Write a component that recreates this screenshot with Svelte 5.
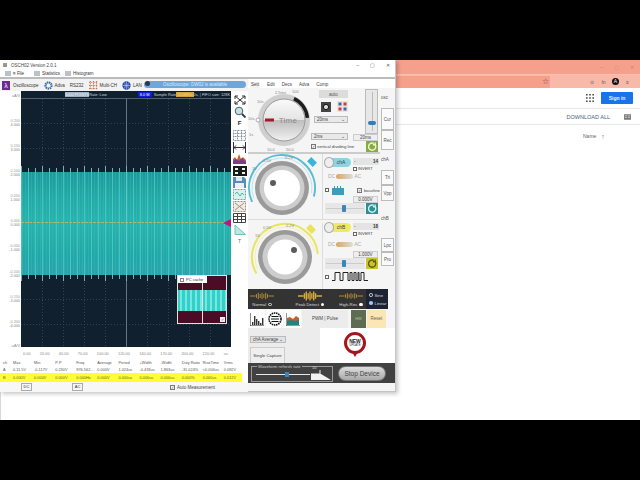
<script>
  const W = 210;
  let wave = '';
  let fine = '';
  let spikes = '';
  for (let x = 0; x < W; x += 1) {
    const phase = x % 7;
    if (phase === 0) {
      const a = x % 21 === 0 ? 6 : 4;
      spikes += `M${x + 0.5} ${81 - a}V81M${x + 0.5} 184V${184 + a}`;
      wave += `M${x + 0.5} 81V184`;
    }
    if (x % 3 === 1) fine += `M${x + 0.5} 81V184`;
  }
  const yLabels = [
    ['0.200', '4.000', 123], ['0.150', '3.000', 148], ['0.100', '2.000', 173], ['0.050', '1.000', 198],
    ['0.000', '0.000', 223], ['-0.050', '-1.000', 248], ['-0.100', '-2.000', 274], ['-0.150', '-3.000', 299],
    ['-0.200', '-4.000', 324]
  ];
  const xLabels = ['0.00','20.00','40.00','70.00','100.00','120.00','140.00','170.00','200.00','220.00','us'];
  const head = ['ch','Max','Min','P-P','Freq','Average','Period','+Width','-Width','Duty Ratio','RiseTime','Vrms'];
  const rowA = ['A','0.11 5V','-0.117V','0.230V','976.562...','0.000V','1.024us','-0.433us','1.863us','-31.024%','<0.004us','0.082V'];
  const rowB = ['B','0.000V','0.000V','0.000V','0.000Hz','0.000V','0.000us','0.000us','0.000us','0.000%','0.000us','0.012V'];
  const tabs = ['Sett','Edit','Decs','Adva','Comp'];
  const modes = [['Normal', true, 7], ['Peak Detect', false, 10], ['High-Res', false, 6]];
  const bars = [3, 9, 6, 4, 2, 7];
  function pt(cx, cy, r, deg) {
    const a = (deg - 90) * Math.PI / 180;
    return [cx + r * Math.cos(a), cy + r * Math.sin(a)];
  }
  function arc(cx, cy, r, from, to) {
    const [x1, y1] = pt(cx, cy, r, from);
    const [x2, y2] = pt(cx, cy, r, to);
    return `M${x1} ${y1}A${r} ${r} 0 ${to - from > 180 ? 1 : 0} 1 ${x2} ${y2}`;
  }
  function modeWave(h) {
    let d = 'M0 3.5h6M20 3.5h6';
    for (let i = 0; i < 7; i++) {
      const hh = (i % 2 ? h : h * 0.6) / 2;
      d += `M${7 + i * 2} ${3.5 - hh}V${3.5 + hh}`;
    }
    return d;
  }
</script>

<div class="screen">
  <div class="letterbox"></div>
  <main class="desktop">
    <section class="browser">
      <div class="b-title"><span>–</span><span>▢</span><span>✕</span></div>
      <div class="b-addr">
        <div class="addr-field"><span class="star">☆</span></div>
        <span class="ext">⊙</span><span class="ext">In</span><span class="ext dark">A</span><span class="ext">≡</span>
      </div>
      <div class="b-head">
        <svg width="10" height="10" viewBox="0 0 10 10" class="apps"><path d="M1 1h1.600v1.600H1zM4.200 1h1.600v1.600H4.200zM7.400 1H9v1.600H7.400zM1 4.200h1.600v1.600H1zM4.200 4.200h1.600v1.600H4.200zM7.400 4.200H9v1.600H7.400zM1 7.400h1.600V9H1zM4.200 7.400h1.600V9H4.200zM7.400 7.400H9V9H7.400z" fill="#444"/></svg>
        <button class="signin">Sign in</button>
      </div>
      <div class="b-tools">
        <span class="dl">DOWNLOAD ALL</span>
        <svg width="7" height="6" viewBox="0 0 9 7"><rect width="9" height="7" fill="#777"/><path d="M1 2h3M1 4h3M5 2h3M5 4h3" stroke="#fff" stroke-width=".7"/></svg>
      </div>
      <div class="b-list"><span>Name</span><span class="up">↑</span></div>
    </section>

    <section class="window">
      <header class="titlebar">
        <span class="app-ico"></span><span class="title">OSCH02 Version 2.0.1</span>
        <div class="win-btns"><span>–</span><span>▢</span><span>✕</span></div>
      </header>
      <nav class="menubar">
        <span class="mi"><i class="m-ico"></i>≡ File</span>
        <span class="mi stat"><i class="m-ico"></i>Statistics</span>
        <span class="mi"><i class="m-ico"></i>Histogram</span>
      </nav>

      <div class="content">
        <div class="left">
          <nav class="tabbar">
            <span class="lam">λ</span><span class="t">Oscilloscope</span>
            <svg width="9" height="9" viewBox="0 0 10 10"><circle cx="5" cy="5" r="3.400" fill="none" stroke="#3a6ea5" stroke-width="2.400" stroke-dasharray="1.600 .7"/></svg><span class="t">Adva</span>
            <span class="t">RS232</span>
            <svg width="9" height="9" viewBox="0 0 10 10"><path d="M0 1.500h10M0 5h10M0 8.500h10M1.500 0v10M5 0v10M8.500 0v10" stroke="#b5562c" stroke-dasharray="1 1"/></svg><span class="t">Multi-CH</span>
            <svg width="9" height="9" viewBox="0 0 10 10"><circle cx="5" cy="5" r="4.600" fill="#2748a8"/><path d="M5 .5v9M.5 5h9M2.500 1.500c1.500 2 1.500 5 0 7M7.500 1.500c-1.500 2-1.500 5 0 7" stroke="#cdd9f5" stroke-width=".6" fill="none"/></svg><span class="t">LAN</span>
            <span class="t faint">⟋ C</span>
            <div class="notice"><i></i>Oscilloscope: DW02 is available</div>
          </nav>
          <div class="scope-row">
            <div class="y-axis">
              <span class="yl top">uA/V</span>
              {#each yLabels as l}
                <span class="yl" style="top:{l[2] - 91 - 4.5}px"><em>{l[0]}</em><br />{l[1]}</span>
              {/each}
              <span class="yl bot">-uA/V</span>
            </div>
            <div class="scope">
              <svg width="210" height="256" viewBox="0 0 210 256">
                <defs>
                  <linearGradient id="band" x1="0" y1="0" x2="0" y2="1">
                    <stop offset="0" stop-color="#1c9a9c"/><stop offset=".25" stop-color="#22a9a8"/><stop offset=".5" stop-color="#27b3ad"/><stop offset=".8" stop-color="#21a8a8"/><stop offset="1" stop-color="#2aa3ac"/>
                  </linearGradient>
                </defs>
                <path d="M0 7.500H210" stroke="#51606c" />
                <g stroke="#2c4554" stroke-dasharray="1 2">
                  {#each [21,42,63,84,126,147,168,189] as x}<path d="M{x}.5 8V256" />{/each}
                  {#each [32,57,82,107,132,157,183,208,233] as y}<path d="M0 {y}.5H210" />{/each}
                </g>
                <path d="M105.500 8V256" stroke="#66757f" />
                <path d={spikes} stroke="#6fb3b6" />
                <rect x="0" y="81" width="210" height="103" fill="url(#band)"/>
                <path d={fine} stroke="#46c4bf" stroke-opacity=".3" />
                <path d={wave} stroke="#62d6d0" stroke-opacity=".55" />
                <path d="M0 131.500H210" stroke="#c2b45c" stroke-dasharray="3 1" stroke-opacity=".9"/>
                <path d="M105.500 81V184" stroke="#7fd4d0" stroke-opacity=".4" />
                <path d="M202 132l8-4v8z" fill="#c4127c" />
              </svg>
              <div class="infobar">
                <span class="live"><b>3000 POINTS</b>Rate: Low</span>
                <span class="rate"><b class="mem">8.0 M</b> Sample Rate<b class="amber">250MS/s</b>0s, | FIFO size: 128K</span>
              </div>
              <div class="pc">
                <label class="pc-lab"><i></i>PC cache</label>
                <svg width="50" height="48" viewBox="0 0 50 48">
                  <rect width="50" height="48" fill="#4c0c25"/>
                  <rect y="14" width="50" height="21" fill="#2fd2ca"/>
                  <path d="M3 14v21M8 14v21M13 14v21M18 14v21M23 14v21M28 14v21M33 14v21M38 14v21M43 14v21M48 14v21" stroke="#a5eee9" stroke-width="1.300"/>
                  <path d="M24.500 0V48" stroke="#e6e0e0"/>
                </svg>
                <i class="pc-check">✓</i>
              </div>
            </div>
            <aside class="tools">
              <svg width="14" height="10" viewBox="0 0 14 10"><path d="M2 1l10 8M12 1L2 9M2 1h3M2 1v3M12 1h-3M12 1v3M2 9h3M2 9V6M12 9H9M12 9V6" stroke="#333" fill="none"/></svg>
              <svg width="12" height="12" viewBox="0 0 12 12"><circle cx="5" cy="5" r="3.800" fill="#bfe3dd" stroke="#557"/><path d="M8 8l3.500 3.500" stroke="#333" stroke-width="1.800"/></svg>
              <b class="f">F</b>
              <svg width="13" height="11" viewBox="0 0 13 11"><path d="M.5.500h12v10H.5zM.5 3.500h12M.5 6.500h12M4.500.500v10M8.500.500v10" stroke="#8a98a6" fill="none" stroke-dasharray="1 .5"/></svg>
              <svg width="13" height="11" viewBox="0 0 13 11"><path d="M.5 0v11M12.500 0v11M1 5.500h11M1 5.500l2-2M1 5.500l2 2M12 5.500l-2-2M12 5.500l-2 2" stroke="#334" fill="none"/></svg>
              <svg width="13" height="11" viewBox="0 0 13 11"><path d="M0 11V6l2-2 2 3 2-6 2 5 2-2 3 3v4z" fill="#c9622b"/><path d="M0 11V8l3-2 3 2 3-3 4 4v2z" fill="#7a3c8e"/></svg>
              <svg width="14" height="10" viewBox="0 0 14 10"><rect width="14" height="10" fill="#1a1a1a"/><path d="M2 2h3v2H2zM9 2h3v2H9zM2 6h3v2H2zM9 6h3v2H9z" fill="#eee"/></svg>
              <svg width="13" height="11" viewBox="0 0 13 11"><path d="M0 0h11l2 2v9H0z" fill="#5a8db5"/><rect x="3" y="0" width="6" height="4" fill="#dbe9f3"/><rect x="2" y="6" width="9" height="5" fill="#eaf2f8"/></svg>
              <svg width="13" height="11" viewBox="0 0 13 11"><rect x=".5" y=".5" width="12" height="10" fill="#d9f0ec" stroke="#57b3a9" stroke-dasharray="1 .5"/><path d="M2 5l2-2 3 4 2-3 2 2" stroke="#57b3a9" fill="none"/></svg>
              <svg width="13" height="11" viewBox="0 0 13 11"><rect x=".5" y=".5" width="12" height="10" fill="#f1ebe3" stroke="#9c8f86" stroke-dasharray="1 .5"/><path d="M2 2l9 7M11 2L2 9" stroke="#9c8f86"/></svg>
              <svg width="13" height="10" viewBox="0 0 13 10"><path d="M.5.500h12v9H.5zM.5 3.500h12M.5 6.500h12M4.500.500v9M8.500.500v9" stroke="#444" fill="none"/></svg>
              <svg width="12" height="11" viewBox="0 0 12 11"><path d="M1 10.500h10.500L1 1z" fill="#bfe6e0" stroke="#6cc4b8"/></svg>
              <span class="t-ico">T</span>
            </aside>
          </div>
          <div class="x-axis">{#each xLabels as l}<span>{l}</span>{/each}</div>
          <table class="meas">
            <thead><tr>{#each head as h}<th>{h}</th>{/each}</tr></thead>
            <tbody>
              <tr>{#each rowA as v}<td>{v}</td>{/each}</tr>
              <tr class="yellow">{#each rowB as v}<td>{v}</td>{/each}</tr>
            </tbody>
          </table>
          <div class="bottom-row">
            <span class="mini dc">DC</span>
            <span class="mini ac">AC</span>
            <label class="auto"><i>✓</i>Auto Measurement</label>
          </div>
        </div>

        <div class="right">
          <div class="r-tabs">{#each tabs as t, i}<span class:active={i === 0}>{t}</span>{/each}</div>

          <div class="r-main">
            <div class="r-col">
              <!-- timebase -->
              <div class="timebase">
                <svg class="dial time" width="66" height="64" viewBox="0 0 66 64">
                  <defs>
                    <linearGradient id="metal" x1="0" y1="0" x2="0" y2="1">
                      <stop offset="0" stop-color="#fafafa"/><stop offset=".5" stop-color="#e4e4e4"/><stop offset=".5" stop-color="#bdbdbd"/><stop offset="1" stop-color="#f2f2f2"/>
                    </linearGradient>
                  </defs>
                  <circle cx="36" cy="31" r="26" fill="#cfcfcf"/>
                  <circle cx="36" cy="31" r="21" fill="url(#metal)" stroke="#9a9a9a"/>
                  <path d={arc(36, 31, 23.500, 25, 85)} fill="none" stroke="#1c1c1c" stroke-width="3.500"/>
                  <rect x="17" y="29.500" width="9" height="3" fill="#a31a28"/>
                  <text x="40" y="34" class="time-text">Time</text>
                  <circle cx="10" cy="31" r="2" fill="#fff" stroke="#aaa"/>
                  <g class="dial-lab">
                    <text x="27" y="5">2.5ms</text><text x="44" y="4">100</text><text x="9" y="14">10s</text><text x="0" y="31">10s</text><text x="1" y="47">1s</text><text x="19" y="62">10.0</text><text x="38" y="62">50.0</text>
                  </g>
                </svg>
                <div class="tb-ctl">
                  <button class="auto-btn">auto</button>
                  <div class="cam-row">
                    <svg width="10" height="10" viewBox="0 0 10 10"><rect width="10" height="10" fill="#444"/><circle cx="5" cy="5" r="2.600" fill="#ddd" stroke="#111"/></svg>
                    <svg width="11" height="11" viewBox="0 0 11 11"><rect width="11" height="11" fill="#efe4d3"/><path d="M1.500 1.500h3v3h-3z" fill="#3468b8"/><path d="M6.500 1.500h3v3h-3z" fill="#c43b58"/><path d="M1.500 6.500h3v3h-3z" fill="#c43b58"/><path d="M6.500 6.500h3v3h-3z" fill="#3468b8"/></svg>
                  </div>
                  <div class="sel s1">20ms<span>⌄</span></div>
                  <div class="sel s2">2ms<span>⌄</span></div>
                  <label class="vdl"><i>✓</i>vertical dividing line</label>
                </div>
                <div class="tb-side">
                  <div class="vslider"><i></i><b></b></div>
                  <div class="val">20ms</div>
                  <div class="round green">
                    <svg width="9" height="9" viewBox="0 0 10 10"><path d="M8 3a4 4 0 1 1-1.500-1.400M8 .5V3H5.500" fill="none" stroke="#f0f6d8" stroke-width="1.500"/></svg>
                  </div>
                </div>
              </div>

              <!-- channel A -->
              <div class="channel cha">
                <svg class="dial" width="72" height="64" viewBox="0 0 72 64">
                  <path d={arc(34, 34, 33, -115, 105)} fill="none" stroke="#59bcd6" stroke-width="2"/>
                  <path d={arc(34, 34, 30, -110, 100)} fill="none" stroke="#bfe3ee" stroke-width="1"/>
                  <circle cx="34" cy="34" r="27" fill="#9a9a9a"/>
                  <circle cx="34" cy="34" r="22.500" fill="#cdcdcd"/>
                  <circle cx="34" cy="34" r="18" fill="#fff"/>
                  <circle cx="25" cy="29" r="3" fill="#5b5b5b"/>
                  <g class="dial-lab">
                    <text x="15" y="8">0.5V</text><text x="37" y="5">0.2V</text><text x="4" y="16">1V</text>
                  </g>
                  <rect x="60" y="5" width="8" height="6" transform="rotate(45 64 8)" fill="#3cb5dd"/>
                </svg>
                <div class="ch-ctl">
                  <div class="ch-top">
                    <div class="toggle ta"><i></i><span>chA</span></div>
                    <div class="col">
                      <div class="spin"><span>-</span><b>14</b></div>
                      <label class="inv"><i></i>INVERT</label>
                    </div>
                  </div>
                  <div class="coupling"><span>DC</span><i class="pill"></i><span>AC</span></div>
                  <div class="base">
                    <label class="bx"><i></i></label>
                    <svg width="12" height="9" viewBox="0 0 12 9"><path d="M0 9V2h2V0h1v2h2V0h1v2h2V0h1v2h3v7z" fill="#3b9dbb"/></svg>
                    <label class="baseline"><i>✓</i>baseline</label>
                  </div>
                  <div class="val wide">0.000V</div>
                  <div class="ch-slide">
                    <div class="hslider"><i></i></div>
                    <div class="round teal"><svg width="9" height="9" viewBox="0 0 10 10"><path d="M8 3a4 4 0 1 1-1.500-1.400M8 .5V3H5.500" fill="none" stroke="#d5f1ef" stroke-width="1.500"/></svg></div>
                  </div>
                </div>
              </div>

              <!-- channel B -->
              <div class="channel chb">
                <svg class="dial" width="72" height="64" viewBox="0 0 72 64">
                  <path d={arc(37, 33, 33, -120, 85)} fill="none" stroke="#e8e466" stroke-width="2"/>
                  <path d={arc(37, 33, 30, -115, 80)} fill="none" stroke="#f2f0b5" stroke-width="1"/>
                  <circle cx="37" cy="33" r="27" fill="#9a9a9a"/>
                  <circle cx="37" cy="33" r="22.500" fill="#cdcdcd"/>
                  <circle cx="37" cy="33" r="17.500" fill="#fff"/>
                  <circle cx="46" cy="26" r="3" fill="#5b5b5b"/>
                  <g class="dial-lab">
                    <text x="15" y="5">0.5V</text><text x="38" y="3">0.2V</text><text x="7" y="13">1V</text>
                  </g>
                  <rect x="59" y="2" width="8" height="6" transform="rotate(45 63 5)" fill="#ece35a"/>
                </svg>
                <div class="ch-ctl">
                  <div class="ch-top">
                    <div class="toggle tb"><i></i><span>chB</span></div>
                    <div class="col">
                      <div class="spin"><span>-</span><b>18</b></div>
                      <label class="inv"><i></i>INVERT</label>
                    </div>
                  </div>
                  <div class="coupling"><span>DC</span><i class="pill"></i><span>AC</span></div>
                  <div class="val wide right-val">1.000V</div>
                  <div class="ch-slide">
                    <div class="hslider"><i></i></div>
                    <div class="round yel"><svg width="9" height="9" viewBox="0 0 10 10"><path d="M8 3a4 4 0 1 1-1.500-1.400M8 .5V3H5.500" fill="none" stroke="#5d5a10" stroke-width="1.500"/></svg></div>
                  </div>
                  <div class="sq">
                    <label class="bx"><i></i></label>
                    <svg width="44" height="9" viewBox="0 0 44 9"><path d="M0 8.500h3V.5h5v8h3V.5h5v8h2V.5h2v8h2V.5h2v8h2V.5h1v8h2V.5h3v8h4" fill="none" stroke="#222"/></svg>
                  </div>
                </div>
              </div>
            </div>

            <div class="side">
              <span class="s-plain a1">osc</span>
              <span class="s-box b1">Cur</span>
              <span class="s-box b2">Rec</span>
              <span class="s-plain a2">chA</span>
              <span class="s-box b3">Tri</span>
              <span class="s-box b4">Vpp</span>
              <span class="s-plain a3">chB</span>
              <span class="s-box b5">Lpc</span>
              <span class="s-box b5">Pro</span>
            </div>
          </div>

          <div class="modes">
            {#each modes as m}
              <div class="mode">
                <svg width="24" height="10" viewBox="0 -1.500 26 10"><path d={modeWave(m[2])} stroke="#d8a93b" stroke-width={m[2] === 10 ? 1.500 : .8}/></svg>
                <span>{m[0]} <i class:hollow={m[1]}></i></span>
              </div>
            {/each}
            <div class="mode-r">
              <span><i class="hollow"></i>Sine</span>
              <span><i class="blue"></i>Linear</span>
            </div>
          </div>

          <div class="func-row">
            <div class="fbtn"><svg width="14" height="13" viewBox="0 0 14 13"><path d="M0 0v13h14" stroke="#222" fill="none"/>{#each bars as b, i}<rect x={2 + i * 2} y={12 - b} width="1.400" height={b} fill="#333"/>{/each}</svg></div>
            <div class="fbtn"><svg width="14" height="14" viewBox="0 0 14 14"><circle cx="7" cy="7" r="6" fill="none" stroke="#111" stroke-width="1.600" stroke-dasharray="1.500 .7"/><path d="M3.500 4.500h7M3 7h8M3.500 9.500h7" stroke="#111" stroke-width="1.100"/></svg></div>
            <div class="fbtn"><svg width="14" height="13" viewBox="0 0 14 13"><path d="M0 0v13h14" stroke="#333" fill="none"/><path d="M1 12V5l3-1 3 2 3-3 3 2v7z" fill="#c35f2c"/><path d="M1 12V8l4-1 4 1 4-1v5z" fill="#18877f"/></svg></div>
            <div class="pwm">PWM | Pulse</div>
            <div class="hw">HW</div>
            <div class="reset">Reset</div>
          </div>

          <div class="lower">
            <div class="acq">
              <div class="sel s3">chA Average<span>⌄</span></div>
              <button class="single">Single Capture</button>
            </div>
            <div class="new">
              <svg width="24" height="28" viewBox="0 0 24 28">
                <circle cx="12" cy="12" r="9.500" fill="#fff" stroke="#a5161c" stroke-width="3"/>
                <path d="M9 21h6l-3 5z" fill="#a5161c"/>
              </svg>
              <span>NEW<small>UPDATE</small></span>
            </div>
          </div>

          <div class="footer">
            <fieldset>
              <legend>Waveform refresh rate</legend>
              <div class="rate-slider"><i></i></div>
              <div class="rate-val">
                <small>10</small>
                <svg width="20" height="10" viewBox="0 0 20 10"><path d="M0 4h10L20 10H0z" fill="#f2f2f2"/><path d="M0 4h9V0" fill="none" stroke="#f2f2f2"/></svg>
              </div>
            </fieldset>
            <button class="stop">Stop Device</button>
          </div>
        </div>
      </div>
    </section>
  </main>
  <div class="letterbox"></div>
</div>

<style>
  :global(body) { margin: 0; background: #000; }
  * { box-sizing: border-box; }
  .screen { width: 640px; height: 480px; display: flex; flex-direction: column; font-family: "Liberation Sans", Arial, sans-serif; overflow: hidden; color: #333; }
  .letterbox { height: 60px; background: #000; }
  .desktop { position: relative; height: 360px; background: #fff; box-shadow: inset 1px 0 0 #d8d8d8; }

  .browser { position: absolute; left: 396px; top: 0; right: 0; height: 360px; display: flex; flex-direction: column; }
  .b-title { height: 14px; background: #f5a08c; display: flex; justify-content: flex-end; align-items: center; gap: 11px; padding-right: 6px; font-size: 5px; color: #c98273; }
  .b-addr { height: 14px; background: #f8b9a9; display: flex; align-items: center; gap: 5px; padding-right: 2px; font-size: 5px; border-top: 1px solid #f8c0b2; }
  .addr-field { width: 154px; height: 12px; background: #f6a08c; display: flex; justify-content: flex-end; align-items: center; padding-right: 1px; margin-right: 33px; }
  .star { font-size: 8px; color: #6b3a32; }
  .ext { width: 7px; text-align: center; color: #555; }
  .ext.dark { background: #111; color: #fff; border-radius: 50%; height: 7px; line-height: 7px; }
  .b-head { height: 21px; display: flex; justify-content: flex-end; align-items: center; padding-right: 7px; border-bottom: 1px solid #e8e8e8; }
  .apps { margin-right: 6px; }
  .signin { width: 32px; height: 12px; padding: 0; border: 0; background: #1a73e8; border-radius: 1px; color: #e8f0fe; font: 700 5px "Liberation Sans", sans-serif; }
  .b-tools { height: 16px; display: flex; justify-content: flex-end; align-items: center; gap: 14px; padding-right: 9px; border-bottom: 1px solid #e8e8e8; }
  .dl { font-size: 5.500px; color: #48627e; }
  .b-list { height: 22px; display: flex; gap: 5px; align-items: center; padding-left: 187px; font-size: 5px; color: #666; }
  .up { font-size: 7px; }

  .window { position: absolute; left: 0; top: 0; width: 396px; height: 332px; background: #f3f3f3; border-right: 1px solid #c4c4cc; border-bottom: 1px solid #c4c4c4; box-shadow: 2px 2px 4px rgba(0,0,0,.22); display: flex; flex-direction: column; z-index: 1; }
  .titlebar { height: 10px; background: #fff; display: flex; align-items: center; font-size: 4.500px; padding: 0 3px; flex: none; }
  .app-ico { width: 4px; height: 4px; background: linear-gradient(135deg, #c95, #69b); margin-right: 4px; }
  .title { color: #444; }
  .win-btns { margin-left: auto; display: flex; gap: 11px; font-size: 5px; padding-right: 2px; color: #555; }
  .menubar { height: 9px; background: #fff; border-bottom: 2px solid #bbb; display: flex; align-items: center; font-size: 4.500px; padding-left: 5px; flex: none; }
  .mi { display: flex; align-items: center; gap: 2px; width: 29px; }
  .stat { width: 31px; }
  .m-ico { width: 6px; height: 5px; background: #b9c2c9; display: block; }
  .tabbar { height: 12px; background: #f2f2f2; display: flex; align-items: center; gap: 2px; padding-left: 2px; font-size: 4.500px; flex: none; position: relative; }
  .lam { width: 8px; height: 9px; background: #6b2a96; color: #fff; font-size: 7px; line-height: 9px; text-align: center; margin-right: 1px; }
  .t { color: #333; margin-right: 3px; }
  .faint { color: #bbb; }
  .notice { position: absolute; left: 144px; top: 2px; width: 102px; height: 7px; background: #6ea6d9; border-radius: 4px; color: #dcebf8; font-size: 4.500px; line-height: 7px; text-align: center; }
  .notice i { position: absolute; left: 1px; top: 0; width: 5px; height: 5px; background: #26384f; border-radius: 50%; }

  .content { display: flex; flex: 1; min-height: 0; }
  .left { width: 248px; flex: none; background: #fff; display: flex; flex-direction: column; }
  .scope-row { display: flex; height: 257px; flex: none; }
  .y-axis { width: 21px; position: relative; font-size: 3.800px; color: #888; text-align: right; line-height: 4.500px; }
  .yl { position: absolute; right: 1px; white-space: nowrap; }
  .yl em { font-style: normal; color: #999; }
  .yl.top { top: 3px; } .yl.bot { top: 253px; }
  .scope { width: 210px; height: 256px; background: #10202e; position: relative; }
  .scope svg { display: block; }
  .infobar { position: absolute; left: 0; right: 0; top: 0; height: 7px; display: flex; justify-content: space-between; align-items: center; color: #ced6db; font-size: 3.900px; padding: 0 1px 0 44px; }
  .infobar b { font-weight: 400; }
  .live b { background: #9fb2c4; color: #eef3f7; }
  .mem { background: #0a1fd8; color: #fff; padding: 0 2px; margin-right: 1px; }
  .amber { background: #d6a33e; color: #f0d690; padding: 0 1px; }
  .pc { position: absolute; left: 156px; top: 184px; width: 50px; height: 49px; background: #4c0c25; border: 1px solid #e5e0e0; overflow: hidden; }
  .pc > svg { position: absolute; left: 0; top: 0; }
  .pc-lab { position: absolute; left: 0; top: 0; z-index: 1; width: 29px; height: 7px; background: #fff; font-size: 4px; color: #333; display: flex; align-items: center; gap: 2px; padding-left: 2px; }
  .pc-lab i { width: 4px; height: 4px; border: .5px solid #888; }
  .pc-check { position: absolute; right: 1px; bottom: 1px; width: 5px; height: 5px; background: #eee; color: #555; font-size: 4px; line-height: 5px; font-style: normal; text-align: center; }

  .tools { width: 17px; display: grid; grid-auto-rows: 11.800px; justify-items: center; align-items: center; align-content: start; padding-top: 3px; background: #fff; }
  .f { font-size: 6px; line-height: 11px; color: #222; }
  .t-ico { font-size: 5px; color: #666; }

  .x-axis { display: flex; justify-content: space-between; height: 10px; align-items: center; width: 226px; padding-left: 21px; margin-left: 2px; font-size: 3.900px; color: #888; flex: none; }
  .meas { border-collapse: collapse; table-layout: fixed; width: 242px; font-size: 3.900px; flex: none; }
  .meas th, .meas td { font-weight: 400; text-align: left; padding: 0 0 0 3px; height: 7px; line-height: 7px; color: #555; white-space: nowrap; overflow: hidden; }
  .meas th { height: 8px; }
  .meas th:first-child, .meas td:first-child { width: 10px; }
  .yellow td { background: #ffff33; color: #66681c; height: 9px; }
  .bottom-row { height: 10px; display: flex; align-items: center; font-size: 4px; flex: none; background: #f7f7f7; }
  .mini { border: 1px solid #aaa; height: 8px; width: 11px; text-align: center; background: #f6f6f6; line-height: 6px; }
  .dc { margin-left: 21px; }
  .ac { margin-left: 40px; }
  .auto { margin-left: 87px; display: flex; align-items: center; gap: 2px; color: #444; font-size: 4.500px; }
  .auto i, .vdl i, .baseline i { width: 5px; height: 5px; border: .5px solid #777; display: block; font-size: 4px; line-height: 4px; font-style: normal; text-align: center; }

  .right { width: 147px; flex: none; background: #f5f5f5; display: flex; flex-direction: column; }
  .r-tabs { height: 9px; background: #fff; display: flex; font-size: 4.500px; padding-left: 2px; gap: 6px; align-items: flex-end; flex: none; color: #444; }
  .r-tabs span { padding: 0 0 1px 1px; }
  .r-tabs .active { background: #f2f2f2; padding: 0 1px 1px; }

  .r-main { display: flex; flex: none; height: 201px; }
  .r-col { width: 132px; display: flex; flex-direction: column; }
  .timebase { height: 66px; display: flex; border-bottom: 2px solid #ccc; padding-top: 1px; flex: none; }
  .dial { display: block; flex: none; overflow: visible; }
  .dial-lab text { font-size: 4px; fill: #888; }
  .time-text { font-size: 8px; fill: #8a8a8a; text-anchor: middle; letter-spacing: .3px; }
  .tb-ctl { width: 37px; margin-left: -3px; display: flex; flex-direction: column; align-items: flex-end; font-size: 4.500px; }
  .auto-btn { width: 29px; height: 8px; padding: 0; border: 0; background: #dcdcdc; color: #555; font: 4.500px "Liberation Sans", sans-serif; margin: 1px 0 3px; }
  .cam-row { width: 28px; display: flex; gap: 6px; align-items: center; height: 11px; padding-left: 1px; }
  .sel { height: 7px; background: #e9e9e9; border: .5px solid #bbb; display: flex; justify-content: space-between; align-items: center; padding: 0 2px; font-size: 4.500px; color: #444; }
  .s1 { width: 34px; margin-top: 4px; }
  .s2 { width: 37px; margin-top: 10px; }
  .vdl { display: flex; gap: 1px; align-items: center; font-size: 4.300px; white-space: nowrap; margin-top: 4px; width: 37px; color: #444; }
  .tb-side { margin-left: 5px; width: 25px; display: flex; flex-direction: column; align-items: flex-end; }
  .vslider { width: 13px; height: 45px; background: #e7e7e7; border: .5px solid #bbb; position: relative; }
  .vslider i { position: absolute; left: 6px; top: 2px; bottom: 2px; width: 1px; background: #bbb; }
  .vslider b { position: absolute; left: 2px; top: 31px; width: 8px; height: 4px; background: #2f7fb8; border-radius: 2px; }
  .val { height: 7px; width: 25px; background: #eee; border: .5px solid #ccc; font-size: 4.500px; text-align: center; line-height: 6px; color: #444; }
  .round { width: 12px; height: 11px; display: flex; align-items: center; justify-content: center; flex: none; }
  .green { background: #87ac3c; }
  .teal { background: #2d8f93; }
  .yel { background: #c9c528; }

  .channel { display: flex; height: 66px; flex: none; }
  .cha { border-bottom: 1px solid #ddd; }
  .chb { height: 69px; padding-top: 4px; }
  .ch-ctl { width: 58px; margin-left: 2px; border-left: .5px solid #ddd; padding: 4px 0 0 2px; display: flex; flex-direction: column; }
  .chb .ch-ctl { padding-top: 0; margin-top: -1px; }
  .chb .coupling { margin-top: 3px; }
  .ch-top { display: flex; gap: 2px; }
  .toggle { width: 26px; height: 9px; border-radius: 5px; position: relative; font-size: 5px; line-height: 9px; text-align: center; padding-left: 6px; color: #444; }
  .toggle i { position: absolute; left: -1px; top: -1px; width: 10px; height: 11px; border-radius: 50%; background: #eee; border: .5px solid #aaa; }
  .ta { background: #8bd4e2; }
  .tb { background: #eeea62; }
  .col { display: flex; flex-direction: column; }
  .spin { width: 26px; height: 7px; background: #e4e4e4; display: flex; justify-content: space-between; padding: 0 1px; font-size: 4.500px; line-height: 7px; }
  .inv { display: flex; align-items: center; gap: 1px; font-size: 4px; height: 7px; color: #444; }
  .inv i, .bx i { width: 4px; height: 4px; border: .5px solid #666; display: block; background: #fff; }
  .coupling { display: flex; gap: 1px; align-items: center; font-size: 5px; color: #aaa; padding-left: 3px; height: 8px; }
  .pill { width: 17px; height: 5px; border-radius: 3px; background: linear-gradient(90deg, #d9a760, #dcdcdc); display: block; }
  .base { display: flex; align-items: center; gap: 3px; height: 12px; margin-top: 4px; }
  .bx { display: block; }
  .baseline { display: flex; gap: 2px; align-items: center; font-size: 4.300px; margin-left: 10px; color: #444; }
  .wide { align-self: flex-end; margin-right: 2px; }
  .ch-slide { display: flex; align-items: center; gap: 1px; }
  .hslider { width: 40px; height: 11px; background: #e7e7e7; position: relative; }
  .hslider::before { content: ""; position: absolute; left: 1px; right: 1px; top: 5px; height: 1px; background: #ccc; }
  .hslider i { position: absolute; left: 17px; top: 2px; width: 4px; height: 7px; background: #3a85bd; border-radius: 1px; }
  .right-val { margin-top: 3px; }
  .sq { display: flex; align-items: center; gap: 3px; margin-top: 3px; }

  .side { width: 15px; display: flex; flex-direction: column; font-size: 4.500px; color: #555; align-items: flex-start; padding-left: 1px; flex: none; }
  .s-plain { line-height: 1; display: flex; align-items: center; }
  .s-box { width: 13px; background: #fafafa; border: .5px solid #bbb; display: flex; align-items: center; justify-content: center; }
  .a1 { height: 20px; } .a2 { height: 20px; } .a3 { height: 37px; }
  .b1 { height: 22px; } .b2 { height: 20px; } .b3 { height: 15px; } .b4 { height: 16px; } .b5 { height: 14px; }

  .modes { height: 20px; width: 140px; background: #333; display: flex; align-items: stretch; font-size: 4.300px; color: #ddd; flex: none; }
  .mode { width: 28px; display: flex; flex-direction: column; align-items: center; justify-content: center; gap: 1px; white-space: nowrap; flex: none; }
  .mode:nth-child(2) { width: 30px; margin-left: 19px; }
  .mode:nth-child(3) { width: 26px; margin-left: 13px; }
  .mode span { display: flex; gap: 2px; align-items: center; }
  .mode i, .mode-r i { width: 3.500px; height: 3.500px; border-radius: 50%; background: #fff; display: inline-block; }
  .mode i.hollow, .mode-r i.hollow { background: transparent; border: .7px solid #ddd; }
  .mode-r { width: 22px; margin-left: 2px; background: #1d2333; display: flex; flex-direction: column; justify-content: center; gap: 3px; padding-left: 3px; flex: none; }
  .mode-r span { display: flex; gap: 2px; align-items: center; }
  .mode-r .blue { background: #9bc3ff; }

  .func-row { height: 18px; width: 140px; display: flex; gap: 1px; flex: none; margin-top: 1px; }
  .fbtn { width: 17px; display: flex; align-items: center; justify-content: center; background: #fdfdfd; }
  .pwm { width: 46px; background: #ececec; font-size: 4.500px; text-align: center; line-height: 18px; color: #444; }
  .hw { width: 15px; margin-left: 2px; background: #5c6b52; color: #b5c09f; font-size: 4px; text-align: center; line-height: 18px; }
  .reset { width: 19px; background: #fbe6b4; color: #665; font-size: 4.500px; text-align: center; line-height: 18px; }

  .lower { display: flex; height: 35px; flex: none; }
  .acq { width: 72px; background: #ececec; padding: 8px 0 0 2px; }
  .s3 { width: 36px; background: #e2e2e2; }
  .single { width: 35px; height: 17px; margin-top: 1px; padding: 0; border: .5px solid #ccc; background: #efefef; font: 4.300px "Liberation Sans", sans-serif; color: #444; }
  .new { flex: 1; background: #fff; position: relative; display: flex; justify-content: center; align-items: flex-start; padding: 3px 5px 0 0; }
  .new span { position: absolute; left: 25px; top: 11px; width: 20px; text-align: center; font-size: 5px; font-weight: 700; line-height: 5px; color: #222; display: flex; flex-direction: column; }
  .new small { font-size: 2.800px; line-height: 3px; font-weight: 400; }

  .footer { height: 20px; background: #414141; display: flex; align-items: center; padding-left: 3px; gap: 5px; flex: none; }
  fieldset { width: 82px; height: 17px; margin: 0; padding: 0 1px 0 4px; border: .5px solid #999; display: flex; align-items: center; gap: 1px; }
  legend { font-size: 4.300px; color: #ccc; padding: 0 1px; line-height: 4px; margin-left: 1px; }
  .rate-slider { width: 54px; height: 1px; background: #e8e8e8; position: relative; }
  .rate-slider i { position: absolute; left: 29px; top: -2px; width: 4px; height: 5px; background: #3b85bd; }
  .rate-val { position: relative; }
  .rate-val small { position: absolute; left: 1px; top: -5px; color: #ddd; font-size: 4px; }
  .rate-val svg { display: block; }
  .stop { width: 48px; height: 15px; border: 1px solid #777; border-radius: 8px; background: linear-gradient(#ddd, #a9a9a9); color: #444; font: 6.500px "Liberation Sans", sans-serif; padding: 0; }
</style>
